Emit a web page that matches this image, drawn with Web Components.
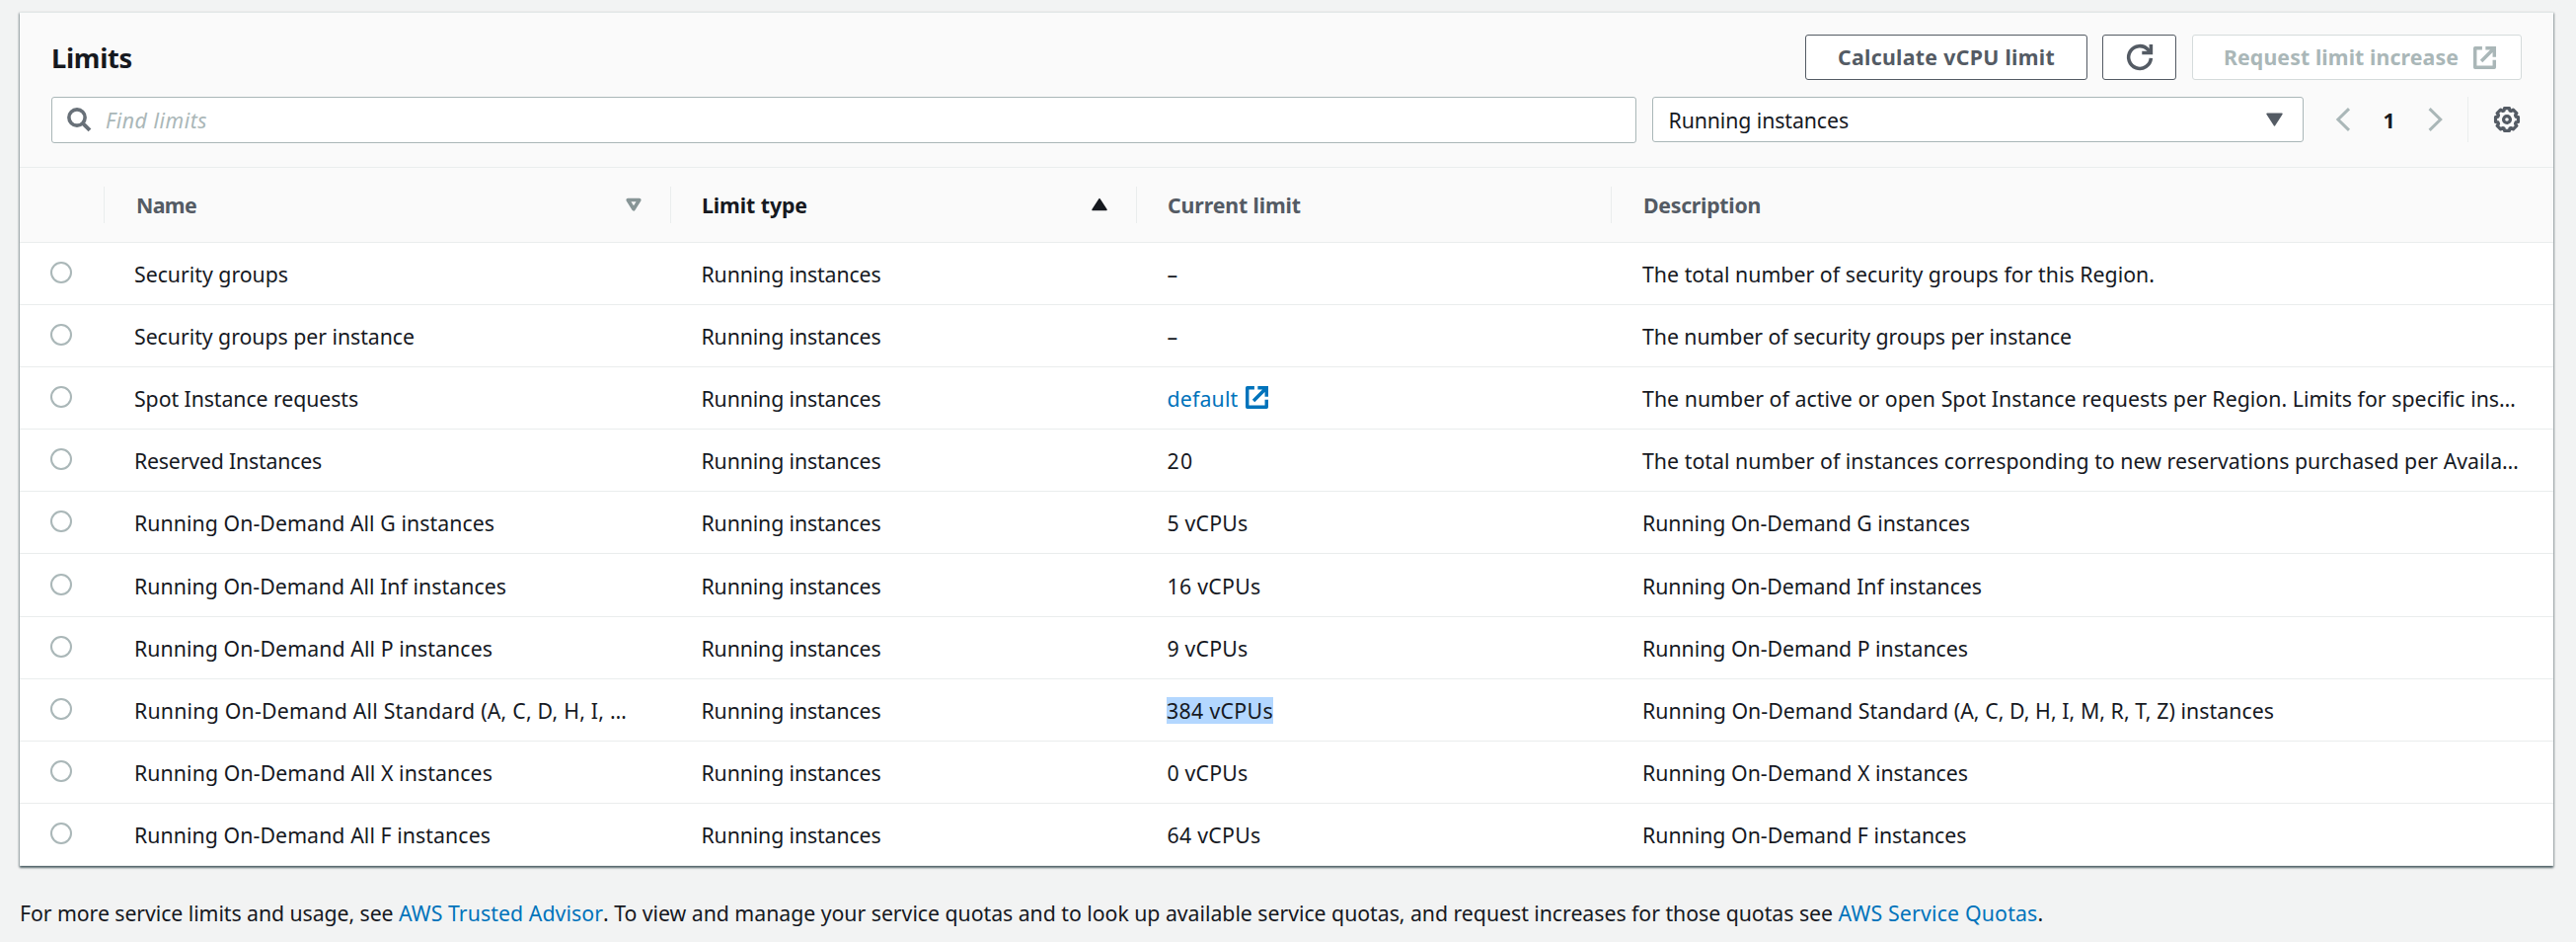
<!DOCTYPE html>
<html lang="en">
<head>
<meta charset="utf-8">
<title>Limits</title>
<style>
html,body{margin:0;height:100%}
body{background:#f2f3f3;color:#16191f;font:21.3px/30px "Noto Sans","Open Sans",sans-serif;overflow:hidden}
</style>
</head>
<body>
<limits-page></limits-page>
<script>
const shadow = (el, html) => { el.attachShadow({mode:'open'}).innerHTML = html; };

// Outline of an eight-toothed gear round (8, 8)
const gearPath = () => {
  const pts = [];
  for (let t = 0; t < 8; t++)
    for (const [a, r] of [[-12, 7.2], [12, 7.2], [18, 5.9], [27, 5.9]]) {
      const rad = (t * 45 + a) * Math.PI / 180;
      pts.push((8 + r * Math.sin(rad)).toFixed(2) + ' ' + (8 - r * Math.cos(rad)).toFixed(2));
    }
  return 'M' + pts.join('L') + 'z';
};

// Icons, drawn on a 16-unit grid
const ICONS = {
  search: '<circle cx="6.4" cy="6.4" r="5.2" stroke-width="2.300"/><path d="M10 10l4.700 4.700" stroke-width="2.500"/>',
  refresh: '<path d="M15 8.600A7 7 0 1 1 13.200 3.300L14.500 4.800" stroke-width="2.200"/><path d="M15 0v5.200h-5.600" stroke-width="2.200"/>',
  external: '<path d="M6.200 1.200H1.200v13.600h13.600V9.500" stroke-width="2.400" stroke-linejoin="round"/><path d="M8.600 1.200h6.200v6.200M14.600 1.400L5.600 10.400" stroke-width="2.400"/>',
  left: '<path d="M12 .8L4.600 8l7.400 7.200" stroke-width="2"/>',
  right: '<path d="M4.400 .8L11.800 8 4.400 15.200" stroke-width="2"/>',
  gear: `<circle cx="8" cy="8" r="2.100" stroke-width="2"/><path stroke-width="2" stroke-linejoin="round" d="${gearPath()}"/>`,
  caretDown: '<path d="M1 2.200h14L8 13z" fill="currentColor" stroke-width="1.500" stroke-linejoin="round"/>',
  caretUp: '<path d="M1 13.500h14L8 2.700z" fill="currentColor" stroke-width="1.500" stroke-linejoin="round"/>',
  sort: '<path d="M2.200 3.500h11.600L8 12.800z" stroke-width="3.600" stroke-linejoin="round"/>'
};
customElements.define('ui-icon', class extends HTMLElement {
  connectedCallback(){
    const s = this.getAttribute('size') || 24;
    shadow(this, `<style>:host{display:block;flex:none;width:${s}px;height:${s}px}svg{display:block;overflow:visible}</style>
    <svg width="${s}" height="${s}" viewBox="0 0 16 16" fill="none" stroke="currentColor">${ICONS[this.getAttribute('name')]}</svg>`);
  }
});

customElements.define('ui-button', class extends HTMLElement {
  connectedCallback(){
    shadow(this, `<style>
    :host{display:flex;align-items:center;justify-content:center;box-sizing:border-box;height:46px;background:#fff;border:1px solid #545b64;border-radius:3px;color:#545b64;font-weight:700}
    :host([disabled]){border-color:#d5dbdb;color:#aab7b8}
    </style><slot></slot>`);
  }
});

customElements.define('limits-header', class extends HTMLElement {
  connectedCallback(){
    shadow(this, `<style>
    :host{display:block;height:157px;box-sizing:border-box;padding:22px 32px 0;background:#fafafa;border-bottom:1px solid #eaeded}
    .row{display:flex;align-items:center}
    .row>*{flex:none}
    .top{height:46px}
    h2{margin:0 auto 0 0;padding-top:1px;font-size:27.300px;line-height:46px;font-weight:700}
    .calc{width:286px}.ref{width:75px;margin-left:15px}.req{width:334px;margin-left:16px;gap:15px;padding-left:6px}
    .filters{margin-top:17px;height:47px;align-items:flex-start}
    .search,.select{box-sizing:border-box;background:#fff;border:1px solid #aab7b8;border-radius:3px;display:flex;align-items:center}
    .search{width:1606px;height:47px;padding-left:15px;color:#687078}
    .search fit-text{margin:1px 0 0 14px;color:#aab7b8;font-style:italic}
    .select{width:660px;height:46px;margin-left:16px;padding:0 20px 0 15.500px;justify-content:space-between}
    .select fit-text{padding-top:2px}
    .select ui-icon{color:#545b64}
    .pager{display:flex;align-items:center;height:46px;margin-left:28px;color:#aab7b8}
    .pager b{width:69px;text-align:center;color:#16191f;line-height:46px;height:46px;padding-top:1px;box-sizing:border-box}
    .pager ui-icon,.gear ui-icon{margin-top:-1px}
    .gear{height:46px;box-sizing:border-box;margin-left:21px;padding-left:26px;border-left:1px solid #eaeded;color:#545b64;display:flex;align-items:center}
    </style>
    <div class="row top"><h2><fit-text w="82">Limits</fit-text></h2>
      <ui-button class="calc"><fit-text w="220">Calculate vCPU limit</fit-text></ui-button>
      <ui-button class="ref"><ui-icon name="refresh" size="26"></ui-icon></ui-button>
      <ui-button class="req" disabled><fit-text w="238">Request limit increase</fit-text><ui-icon name="external" size="23"></ui-icon></ui-button>
    </div>
    <div class="row filters">
      <div class="search"><ui-icon name="search" size="25"></ui-icon><fit-text w="103">Find limits</fit-text></div>
      <div class="select"><fit-text w="182.500">Running instances</fit-text><ui-icon name="caretDown" size="17"></ui-icon></div>
      <div class="pager"><ui-icon name="left"></ui-icon><b>1</b><ui-icon name="right"></ui-icon></div>
      <div class="gear"><ui-icon name="gear" size="26"></ui-icon></div>
    </div>`);
  }
});

const GRID = 'display:grid;grid-template-columns:85px 574px 472px 481px 1fr;';
customElements.define('limits-columns', class extends HTMLElement {
  connectedCallback(){
    shadow(this, `<style>
    :host{${GRID}height:76px;box-sizing:border-box;background:#fafafa;border-bottom:1px solid #eaeded;align-items:center;font-weight:700;color:#545b64}
    div{height:37px;box-sizing:border-box;border-left:1px solid #eaeded;padding:0 29px 0 31px;display:flex;justify-content:space-between;align-items:center}
    fit-text{padding-top:1px}
    .off{padding-left:32px}
    ui-icon{color:#879596;margin-top:-1px}
    .on,.on ui-icon{color:#16191f}
    </style><span></span>
    <div class="off"><fit-text w="61">Name</fit-text><ui-icon name="sort" size="16"></ui-icon></div>
    <div class="on"><fit-text w="107">Limit type</fit-text><ui-icon name="caretUp" size="16"></ui-icon></div>
    <div><fit-text w="135">Current limit</fit-text></div>
    <div class="off"><fit-text w="119">Description</fit-text></div>`);
  }
});

// Each row: name, current limit and description, with their text widths
const ROWS = [
  ['Security groups',156,'–',12,'The total number of security groups for this Region.',519],
  ['Security groups per instance',284,'–',12,'The number of security groups per instance',435],
  ['Spot Instance requests',227,'default',72,'The number of active or open Spot Instance requests per Region. Limits for specific ins…',885],
  ['Reserved Instances',190,'20',27,'The total number of instances corresponding to new reservations purchased per Availa…',888],
  ['Running On-Demand All G instances',365,'5 vCPUs',82,'Running On-Demand G instances',332],
  ['Running On-Demand All Inf instances',377,'16 vCPUs',95,'Running On-Demand Inf instances',344],
  ['Running On-Demand All P instances',363,'9 vCPUs',82,'Running On-Demand P instances',330],
  ['Running On-Demand All Standard (A, C, D, H, I, …',499,'384 vCPUs',108,'Running On-Demand Standard (A, C, D, H, I, M, R, T, Z) instances',640],
  ['Running On-Demand All X instances',363,'0 vCPUs',82,'Running On-Demand X instances',330],
  ['Running On-Demand All F instances',361,'64 vCPUs',95,'Running On-Demand F instances',328.5]
];
customElements.define('limit-row', class extends HTMLElement {
  connectedCallback(){
    const i = +this.getAttribute('index'), r = ROWS[i];
    shadow(this, `<style>
    :host{${GRID}height:${i === 5 ? 64 : 63}px;box-sizing:border-box;border-bottom:1px solid #eaeded;background:#fff;align-items:center}
    .radio{width:22px;height:22px;box-sizing:border-box;border:2px solid #aab7b8;border-radius:50%;margin:0 0 2px 31px}
    .cell{padding:2px 0 0 31.500px;display:flex;align-items:center}
    .cell:nth-child(3){padding-left:31px}
    .cell:last-child{padding-left:32px}
    .link{color:#0073bb}
    .link ui-icon{margin:-3px 0 0 7px}
    .sel{padding-left:31px}
    .sel fit-text{background:linear-gradient(#b3d7ff,#b3d7ff) 0 1px/100% 27px no-repeat}
    </style>
    <span class="radio"></span>
    <div class="cell"><fit-text w="${r[1]}">${r[0]}</fit-text></div>
    <div class="cell"><fit-text w="182">Running instances</fit-text></div>
    <div class="cell ${i === 2 ? 'link' : i === 7 ? 'sel' : ''}"><fit-text w="${r[3]}">${r[2]}</fit-text>${i === 2 ? '<ui-icon name="external" size="23"></ui-icon>' : ''}</div>
    <div class="cell"><fit-text w="${r[5]}">${r[4]}</fit-text></div>`);
  }
});

customElements.define('limits-card', class extends HTMLElement {
  connectedCallback(){
    shadow(this, `<style>
    :host{display:block;background:#fff;border-top:1px solid #e3e8e8;box-shadow:0 2px 2px 0 rgba(0,28,36,.5),1px 1px 2px 0 rgba(0,28,36,.25),-1px 1px 2px 0 rgba(0,28,36,.25)}
    </style><slot></slot>`);
  }
});

customElements.define('limits-page', class extends HTMLElement {
  connectedCallback(){
    shadow(this, `<style>
    :host{display:block;padding:12px 23px 0 20px}
    p{margin:33px 0 0;display:flex;line-height:30px}
    a{color:#0073bb}
    </style>
    <limits-card><limits-header></limits-header><limits-columns></limits-columns>${ROWS.map((_, i) => `<limit-row index="${i}"></limit-row>`).join('')}</limits-card>
    <p><fit-text w="384">For more service limits and usage, see </fit-text><a><fit-text w="207">AWS Trusted Advisor</fit-text></a><fit-text w="1251.500">. To view and manage your service quotas and to look up available service quotas, and request increases for those quotas see </fit-text><a><fit-text w="202">AWS Service Quotas</fit-text></a><span>.</span></p>`);
  }
});

// Tracks its text so that it fills the width w. Defined last, once the surrounding styles apply.
customElements.define('fit-text', class extends HTMLElement {
  connectedCallback(){
    shadow(this, '<style>:host{display:block;flex:none;white-space:pre}span{display:inline-block}</style><span><slot></slot></span>');
    const span = this.shadowRoot.querySelector('span'), w = +this.getAttribute('w');
    span.style.letterSpacing = (w - span.getBoundingClientRect().width) / this.textContent.length + 'px';
  }
});
</script>
</body>
</html>
